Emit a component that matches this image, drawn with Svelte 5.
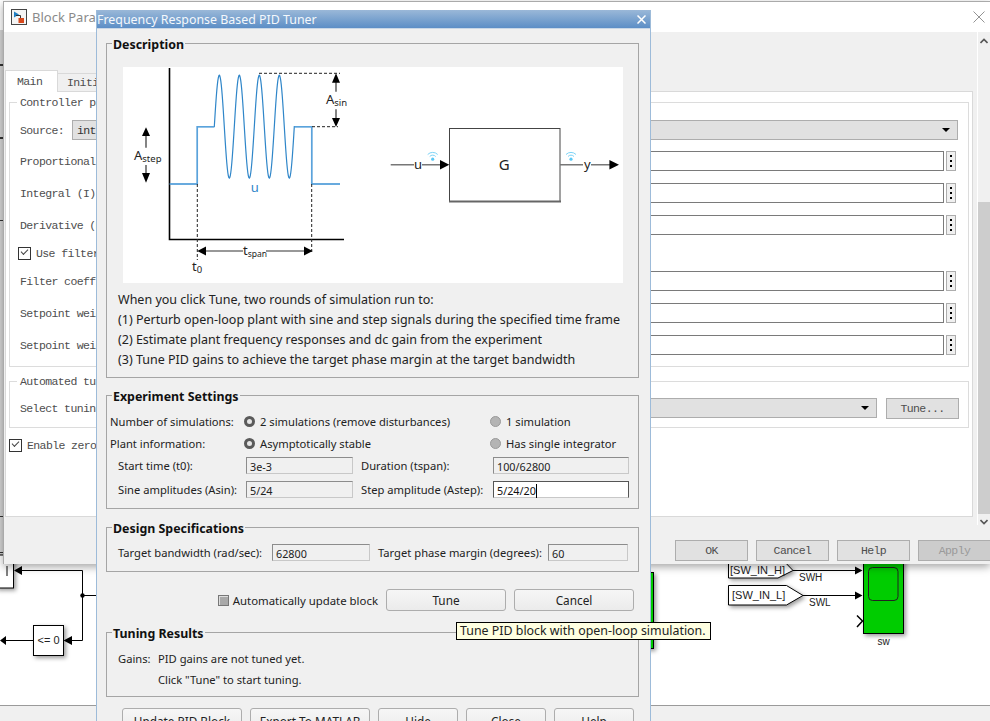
<script>
  // sine burst of the experiment signal, page px inside the description picture
  let burst = []
  for (let x = 214.3; x <= 294.31; x += 0.5) {
    burst.push(x.toFixed(1) + ',' + (126.7 - 51.4 * Math.sin(((x - 214.3) / 20) * 2 * Math.PI)).toFixed(1))
  }
  const signal = '169.7,184 197.3,184 197.3,126.7 214.3,126.7 ' + burst.join(' ') + ' 311.7,126.7 311.7,184 340,184'

  const backRows = [
    'Proportional (P):',
    'Integral (I):',
    'Derivative (D):'
  ]
  const backRows2 = [
    'Filter coefficient (N):',
    'Setpoint weight (b):',
    'Setpoint weight (c):'
  ]
  const footer = ['Update PID Block', 'Export To MATLAB', 'Hide', 'Close', 'Help']
  const wifi = [432.7, 571]
</script>

<div class="desk">
  <svg class="canvas" width="990" height="721" viewBox="0 0 990 721">
    <rect x="0" y="30" width="3" height="535" fill="#d6d6d6" />
    <g fill="#333">
      <rect x="0" y="64" width="3" height="2" />
      <rect x="0" y="137" width="3" height="2" />
      <rect x="0" y="220" width="3" height="1" />
      <rect x="0" y="516" width="3" height="1" />
      <rect x="0" y="552" width="3" height="1" />
    </g>

    <g class="shadowed">
      <rect x="-4" y="555" width="17.5" height="33" fill="#fff" stroke="#000" stroke-width="1" />
    </g>
    <path d="M7 566v10" stroke="#000" fill="none" />
    <path d="M22 570.5H82.5V640.5H72M82.5 595.5H96M33 640.5H6" stroke="#000" fill="none" />
    <path d="M14 570.5l8-4.5v9zM63.5 640.5l8.5-4.5v9zM0 640.5l6-4.5v9z" fill="#000" />
    <circle cx="82.5" cy="595.5" r="2.2" fill="#000" />
    <g class="shadowed">
      <rect x="33.5" y="625.5" width="30" height="30" fill="#fff" stroke="#000" />
    </g>
    <text x="48.5" y="644" class="block-text" text-anchor="middle">&lt;= 0</text>

    <g class="shadowed">
      <rect x="640" y="572.5" width="13.5" height="76" fill="#00cc00" stroke="#000" />
      <path d="M728.5 555H778L793 570.5L778 578H728.5Z" fill="#fff" stroke="#000" />
      <path d="M728.5 585.5H786.5L803 595.5L786.5 605H728.5Z" fill="#fff" stroke="#000" />
      <rect x="863.5" y="555" width="40" height="78.5" fill="#00cc00" stroke="#000" />
    </g>
    <rect x="868.5" y="567.5" width="29.5" height="33" rx="4" fill="#00cc00" stroke="#222" />
    <path d="M793 570.5H856M803 595.5H856" stroke="#000" fill="none" />
    <path d="M862.5 570.5l-7.5-4v8zM862.5 595.5l-7.5-4v8z" fill="#000" />
    <path d="M857 615.5l5.5 5.5-5.5 6" stroke="#000" stroke-width="1.5" fill="none" />
    <text x="730" y="574" class="block-text">[SW_IN_H]</text>
    <text x="732" y="599" class="block-text">[SW_IN_L]</text>
    <text x="799" y="581" class="block-text small">SWH</text>
    <text x="809" y="606" class="block-text small">SWL</text>
    <text x="883.5" y="645" class="block-text small" text-anchor="middle">sw</text>
  </svg>

  <div class="status"></div>

  <section class="back">
    <header class="back-title">
      <svg width="16" height="16" viewBox="0 0 16 16">
        <rect x=".5" y=".5" width="15" height="15" fill="#f4f4f4" stroke="#444" />
        <path d="M3 2.5l5 3-5 3z" fill="#1f7fc4" />
        <path d="M5 6.5h4.5V10" stroke="#333" fill="none" />
        <rect x="7.5" y="9" width="5.5" height="5" fill="#d8491c" />
      </svg>
      <span>Block Parameters: PID Controller</span>
      <svg class="back-close" width="12" height="12" viewBox="0 0 12 12">
        <path d="M.5.5l11 11M11.5.5l-11 11" stroke="#777" stroke-width=".8" fill="none" />
      </svg>
    </header>

    <div class="back-main">
      <div class="back-content">
        <div class="tabs">
          <div class="tab active">Main</div>
          <div class="tab">Initialization</div>
        </div>
        <div class="panel">
          <fieldset class="back-group first">
            <legend>Controller parameters</legend>
            <div class="back-row source">
              <span class="source-label">Source:</span>
              <div class="select"><span>internal</span><i class="caret"></i></div>
            </div>
            {#each backRows as label}
              <div class="back-row">
                <span class="back-label">{label}</span>
                <div class="field"></div>
                <div class="dots"><b></b><b></b><b></b></div>
              </div>
            {/each}
            <div class="check-row filter">
              <i class="tick"></i><span>Use filtered derivative</span>
            </div>
            {#each backRows2 as label}
              <div class="back-row">
                <span class="back-label">{label}</span>
                <div class="field"></div>
                <div class="dots"><b></b><b></b><b></b></div>
              </div>
            {/each}
          </fieldset>

          <fieldset class="back-group second">
            <legend>Automated tuning</legend>
            <div class="back-row tuning">
              <span class="back-label">Select tuning method:</span>
              <div class="select"><i class="caret"></i></div>
              <div class="back-btn">Tune...</div>
            </div>
          </fieldset>

          <div class="check-row zero">
            <i class="tick"></i><span>Enable zero-crossing detection</span>
          </div>
        </div>
        <div class="back-actions">
          <div class="back-btn">OK</div>
          <div class="back-btn">Cancel</div>
          <div class="back-btn">Help</div>
          <div class="back-btn off">Apply</div>
        </div>
      </div>
      <div class="scrollbar">
        <svg width="8" height="6" viewBox="0 0 8 6"><path d="M.5 5L4 1.5 7.5 5" stroke="#555" stroke-width="1.6" fill="none" /></svg>
        <div class="thumb"></div>
        <svg width="8" height="6" viewBox="0 0 8 6"><path d="M.5 1L4 4.5 7.5 1" stroke="#555" stroke-width="1.6" fill="none" /></svg>
      </div>
    </div>
  </section>

  <section class="dialog">
    <header class="dialog-title">
      <span>Frequency Response Based PID Tuner</span>
      <svg width="9" height="9" viewBox="0 0 9 9"><path d="M.5.5l8 8M8.5.5l-8 8" stroke="#fff" stroke-width="1.5" fill="none" /></svg>
    </header>

    <div class="dialog-body">
      <fieldset class="desc">
        <legend>Description</legend>
        <svg class="picture" width="500" height="216" viewBox="123 67 500 216">
          <rect x="123" y="67" width="500" height="216" fill="#fff" />
          <path d="M169.5 68V239.5H344" stroke="#000" stroke-width="1.6" fill="none" />
          <polyline points={signal} stroke="#2f86c9" stroke-width="1.2" fill="none" />
          <path d="M169.7 184H197.3V126.7H214M294.5 126.7H311.7V184H340" stroke="#5aa3dc" stroke-width="1.5" fill="none" />
          <g stroke="#222" stroke-width="1" stroke-dasharray="3 2" fill="none">
            <path d="M259 73.3H340M312 126.7H338M197.3 184V260M311.7 184V252" />
          </g>
          <g stroke="#333" stroke-width="1.2" fill="none">
            <path d="M336 82V91.7M336 109.3V118M146 136V147.7M146 165V173M206 251H243M266 251H304" />
          </g>
          <path d="M336 73.3l4 9.4h-8zM336 127l4-9h-8zM146 127.3l4 8.7h-8zM146 182.7l4-9.7h-8zM197.3 251l8.7-4.5v9zM312.7 251l-8.7-4.5v9z" fill="#000" />
          <text x="326" y="104" class="sym">A<tspan class="sub" dy="2">sin</tspan></text>
          <text x="134" y="160" class="sym">A<tspan class="sub" dy="2">step</tspan></text>
          <text x="254.7" y="192" class="sym blue" text-anchor="middle">u</text>
          <text x="243" y="255" class="sym">t<tspan class="sub tiny" dy="2">span</tspan></text>
          <text x="192" y="271" class="sym">t<tspan class="sub" dy="2">0</tspan></text>

          <rect x="449.5" y="128.5" width="110.5" height="73" fill="#fff" stroke="#444" stroke-width="1" />
          <path d="M449 201.5H561" stroke="#666" stroke-width="2" />
          <path d="M390.7 164.7H441M560 164.7H610" stroke="#777" stroke-width="1.5" fill="none" />
          <path d="M449.3 164.7l-9.3-4.7v9.4zM619 164.7l-9.6-4.7v9.4z" fill="#000" />
          <rect x="414" y="158" width="8" height="12" fill="#fff" />
          <rect x="583" y="158" width="8" height="12" fill="#fff" />
          <text x="418" y="169" class="sym" text-anchor="middle">u</text>
          <text x="587.3" y="169" class="sym" text-anchor="middle">y</text>
          <text x="504.3" y="170" class="sym big" text-anchor="middle">G</text>
          {#each wifi as x}
            <circle cx={x} cy="159.2" r="1.6" fill="#5cc8f5" />
            <path d="M{x - 3} 156.5a4 4 0 0 1 6 0M{x - 5} 154.5a7 7 0 0 1 10 0" stroke="#7ed4f7" fill="none" />
          {/each}
        </svg>
        <div class="desc-text">
          <p>When you click Tune, two rounds of simulation run to:</p>
          <p>(1) Perturb open-loop plant with sine and step signals during the specified time frame</p>
          <p>(2) Estimate plant frequency responses and dc gain from the experiment</p>
          <p>(3) Tune PID gains to achieve the target phase margin at the target bandwidth</p>
        </div>
      </fieldset>

      <fieldset class="experiment">
        <legend>Experiment Settings</legend>
        <div class="radio-grid">
          <span>Number of simulations:</span>
          <label><i class="radio on"></i>2 simulations (remove disturbances)</label>
          <label><i class="radio"></i>1 simulation</label>
          <span>Plant information:</span>
          <label><i class="radio on"></i>Asymptotically stable</label>
          <label><i class="radio"></i>Has single integrator</label>
        </div>
        <div class="input-grid">
          <span>Start time (t0):</span>
          <div class="input">3e-3</div>
          <span class="second">Duration (tspan):</span>
          <div class="input">100/62800</div>
          <span>Sine amplitudes (Asin):</span>
          <div class="input">5/24</div>
          <span class="second">Step amplitude (Astep):</span>
          <div class="input focus">5/24/20</div>
        </div>
      </fieldset>

      <fieldset class="design">
        <legend>Design Specifications</legend>
        <div class="design-grid">
          <span>Target bandwidth (rad/sec):</span>
          <div class="input">62800</div>
          <span class="second">Target phase margin (degrees):</span>
          <div class="input">60</div>
        </div>
      </fieldset>

      <div class="tune-row">
        <i class="box"></i>
        <span class="auto">Automatically update block</span>
        <button>Tune</button>
        <button>Cancel</button>
      </div>

      <fieldset class="results">
        <legend>Tuning Results</legend>
        <div class="gains">
          <span>Gains:</span><span>PID gains are not tuned yet.</span>
          <span></span><span>Click "Tune" to start tuning.</span>
        </div>
      </fieldset>

      <div class="footer">
        {#each footer as name, i}
          <button class:small={i > 1}>{name}</button>
        {/each}
      </div>
    </div>
  </section>

  <div class="tooltip">Tune PID block with open-loop simulation.</div>
</div>

<style>
  :global(body) {
    margin: 0;
    background: #fff;
  }

  .desk {
    position: relative;
    width: 990px;
    height: 721px;
    overflow: hidden;
    background: #fff;
    font-family: 'Noto Sans', sans-serif;
    font-size: 11.2px;
    color: #222;
  }

  .canvas {
    position: absolute;
    left: 0;
    top: 0;
  }

  .shadowed {
    filter: drop-shadow(2px 2px 2px rgba(0, 0, 0, 0.4));
  }

  .block-text {
    font-family: 'Liberation Sans', sans-serif;
    font-size: 11px;
    fill: #222;
  }

  .block-text.small {
    font-size: 10px;
  }

  .status {
    position: absolute;
    left: 0;
    right: 0;
    top: 705px;
    bottom: 0;
    background: #f0f0f0;
    border-top: 1px solid #9a9a9a;
  }

  /* window behind */
  .back {
    position: absolute;
    left: 3px;
    top: 1px;
    width: 987px;
    height: 563px;
    box-sizing: border-box;
    display: flex;
    flex-direction: column;
    background: #f0f0f0;
    border-top: 1px solid #aaa;
    border-left: 1px solid #aaa;
    box-shadow: 0 3px 8px rgba(0, 0, 0, 0.35);
    font-family: 'Liberation Mono', monospace;
    font-size: 11.5px;
    letter-spacing: -0.6px;
    color: #4e4e4e;
  }

  .back-title {
    height: 30px;
    flex: none;
    display: flex;
    align-items: center;
    gap: 5px;
    padding: 0 5px 0 7px;
    background: #fff;
    font-family: 'Noto Sans', sans-serif;
    font-size: 13px;
    letter-spacing: 0;
    color: #8a8a8a;
  }

  .back-close {
    margin-left: auto;
  }

  .back-main {
    flex: 1;
    display: flex;
    min-height: 0;
  }

  .back-content {
    width: 969px;
    padding: 38px 0 0 1px;
    box-sizing: border-box;
  }

  .tabs {
    display: flex;
    align-items: flex-end;
    height: 21px;
  }

  .tab {
    height: 17px;
    line-height: 17px;
    padding: 0 9px;
    overflow: hidden;
    white-space: nowrap;
    border: 1px solid #d9d9d9;
    border-bottom: 0;
    box-sizing: content-box;
    flex: none;
  }

  .tab.active {
    width: 31px;
    padding: 0 9px 0 11px;
    height: 21px;
    line-height: 22px;
    background: #fff;
    position: relative;
    z-index: 1;
    margin-bottom: -1px;
  }

  .tab:not(.active) {
    width: 60px;
    border-left: 0;
  }

  .panel {
    height: 426px;
    box-sizing: border-box;
    background: #fff;
    border: 1px solid #d9d9d9;
    padding: 3px 3px 0;
  }

  .back-group {
    margin: 0;
    padding: 0 12px 11px 10px;
    border: 1px solid #dcdcdc;
  }

  .back-group legend {
    padding: 0 0 0 3px;
    margin-left: -3px;
    line-height: 15px;
    background: #fff;
  }

  .back-row {
    display: flex;
    height: 20px;
    align-items: center;
    margin-top: 12px;
    white-space: nowrap;
  }

  .back-row.source {
    margin: 2px -2px 0 0;
  }

  .back-row.source + .back-row {
    margin-top: 11px;
  }

  .back-group.first {
    padding-top: 8px;
  }

  .source-label {
    width: 52px;
    flex: none;
  }

  .back-label {
    width: 200px;
    flex: none;
  }

  .select {
    flex: 1;
    height: 20px;
    box-sizing: border-box;
    display: flex;
    align-items: center;
    padding: 0 4px;
    background: #e1e1e1;
    border: 1px solid #adadad;
    color: #333;
  }

  .caret {
    width: 0;
    height: 0;
    border: 4px solid transparent;
    border-top: 4px solid #000;
    border-bottom: 0;
    margin: 0 3px 0 auto;
  }

  .field {
    flex: 1;
    height: 20px;
    box-sizing: border-box;
    border: 1px solid #7a7a7a;
    background: #fff;
  }

  .dots {
    width: 10px;
    height: 20px;
    margin-left: 2px;
    box-sizing: border-box;
    display: flex;
    flex-direction: column;
    align-items: center;
    justify-content: center;
    gap: 3px;
    background: #f0f0f0;
    border: 1px solid #adadad;
  }

  .dots b {
    width: 2px;
    height: 2px;
    background: #000;
  }

  .check-row {
    display: flex;
    align-items: center;
    gap: 5px;
    margin-top: 11px;
    height: 14px;
    white-space: nowrap;
  }

  .check-row.filter {
    margin-left: -2px;
  }

  .tick {
    width: 13px;
    height: 13px;
    box-sizing: border-box;
    border: 1px solid #333;
    position: relative;
    flex: none;
  }

  .tick::after {
    content: '';
    position: absolute;
    left: 2px;
    top: 1px;
    width: 6px;
    height: 3px;
    border-left: 1.5px solid #444;
    border-bottom: 1.5px solid #444;
    transform: rotate(-45deg);
  }

  .check-row + .back-row {
    margin-top: 11px;
  }

  .check-row.zero {
    margin: 10px 0 0 0;
  }

  .back-group.second {
    margin-top: 7px;
    padding: 0 9px 9px 10px;
  }

  .back-row.tuning {
    margin-top: 9px;
    gap: 0;
  }

  .tuning .select {
    margin-right: 9px;
  }

  .back-btn {
    width: 73px;
    height: 21px;
    box-sizing: border-box;
    display: flex;
    align-items: center;
    justify-content: center;
    background: #e1e1e1;
    border: 1px solid #adadad;
    flex: none;
  }

  .back-btn.off {
    background: #cccccc;
    color: #9a9a9a;
  }

  .back-actions {
    display: flex;
    gap: 8px;
    margin-top: 23px;
    margin-left: 670px;
    width: 400px;
  }

  .scrollbar {
    width: 14px;
    margin-left: 4px;
    height: 493px;
    display: flex;
    flex-direction: column;
    align-items: center;
    padding-top: 6px;
    box-sizing: border-box;
    background: #f0f0f0;
    border-left: 1px solid #fff;
    position: relative;
  }

  .thumb {
    width: 100%;
    flex: 1;
    margin: 158px 0 5px;
    background: #cdcdcd;
  }

  /* tuner dialog */
  .dialog {
    position: absolute;
    left: 96px;
    top: 10px;
    width: 555px;
    height: 711px;
    box-sizing: border-box;
    overflow: hidden;
    background: #f0f0f0;
    border-left: 1px solid #9dbbd9;
    border-right: 1px solid #9dbbd9;
  }

  .dialog-title {
    height: 19px;
    box-sizing: border-box;
    display: flex;
    align-items: center;
    justify-content: space-between;
    padding: 0 4px 0 0;
    background: linear-gradient(#9ab8d8, #5c8ec6);
    border-bottom: 1px solid #c9d7e6;
    color: #f4f8fc;
    font-size: 12.4px;
    white-space: nowrap;
  }

  .dialog-body {
    padding: 4px 11px 0 9px;
  }

  fieldset {
    margin: 0;
    border: 1px solid #a5a5a5;
    min-width: 0;
  }

  /* extra top padding drops the caption a little under the frame line */
  .dialog-body legend {
    padding: 4px 1px 0;
    margin: 0 0 -4px;
    font-weight: 700;
    font-size: 12.4px;
    line-height: 16px;
    color: #111;
  }

  .desc {
    padding: 18px 15px 7px 5px;
  }

  .picture {
    display: block;
    margin-left: 11px;
  }

  .sym {
    font-family: 'Noto Sans', sans-serif;
    font-size: 13px;
    fill: #222;
  }

  .sym.blue {
    fill: #2f86c9;
  }

  .sym.big {
    font-size: 15px;
  }

  .sub {
    font-size: 9.5px;
  }

  .sub.tiny {
    font-size: 8.5px;
  }

  .desc-text {
    margin: 7px 0 0 6px;
    font-size: 12.5px;
  }

  .desc-text p {
    margin: 0;
    line-height: 20px;
    white-space: nowrap;
  }

  .experiment {
    margin-top: 7px;
    padding: 9px 9px 10px 5px;
  }

  .radio-grid {
    display: grid;
    grid-template-columns: 134px 246px 1fr;
    grid-auto-rows: 22px;
    align-items: center;
    margin-left: -2px;
    white-space: nowrap;
  }

  .radio-grid label {
    display: flex;
    align-items: center;
    gap: 5px;
  }

  .radio {
    width: 11px;
    height: 11px;
    box-sizing: border-box;
    border-radius: 50%;
    background: #b4b4b4;
    border: 1px solid #9a9a9a;
    flex: none;
  }

  .radio.on {
    background: #e6e6e6;
    border: 3px solid #5a5a5a;
  }

  .input-grid {
    display: grid;
    grid-template-columns: 128px 107px 140px 136px;
    grid-auto-rows: 17px;
    row-gap: 7px;
    align-items: center;
    margin: 3px 0 0 6px;
    white-space: nowrap;
  }

  .second {
    padding-left: 8px;
  }

  .input {
    height: 17px;
    box-sizing: border-box;
    padding-left: 3px;
    line-height: 17px;
    background: #f0f0f0;
    border: 1px solid #c8c8c8;
    border-top-color: #8c8c8c;
    border-left-color: #8c8c8c;
    font-size: 10.8px;
  }

  .input.focus {
    background: #fff;
    border-color: #555;
    border-bottom-color: #c8c8c8;
    color: #111;
  }

  .input.focus::after {
    content: '';
    display: inline-block;
    width: 1px;
    height: 14px;
    background: #000;
    vertical-align: -3px;
  }

  .design {
    margin-top: 8px;
    padding: 11px 9px 10px 5px;
  }

  .design-grid {
    display: grid;
    grid-template-columns: 154px 98px 178px 80px;
    align-items: center;
    margin-left: 6px;
    white-space: nowrap;
  }

  .tune-row {
    display: flex;
    align-items: center;
    justify-content: flex-end;
    gap: 8px;
    height: 22px;
    margin-top: 17px;
    padding-right: 5px;
  }

  .box {
    width: 11px;
    height: 11px;
    box-sizing: border-box;
    background: #a9a9a9;
    border: 1px solid #777;
    box-shadow: inset 1px 1px 0 #ddd;
    margin-right: -4px;
  }

  .auto {
    font-size: 11.4px;
    white-space: nowrap;
  }

  button {
    width: 120px;
    height: 22px;
    padding: 0;
    box-sizing: border-box;
    background: linear-gradient(#f6f6f6, #ebebeb);
    border: 1px solid #adadad;
    border-radius: 3px;
    font: inherit;
    font-size: 11.8px;
    color: #222;
    white-space: nowrap;
  }

  button.small {
    width: 80px;
  }

  .results {
    margin-top: 11px;
    padding: 10px 9px 6px 5px;
  }

  .gains {
    display: grid;
    grid-template-columns: 40px 1fr;
    grid-auto-rows: 21px;
    align-items: center;
    margin-left: 6px;
  }

  .footer {
    display: flex;
    justify-content: flex-end;
    gap: 8px;
    margin-top: 11px;
    padding-right: 5px;
  }

  .footer button {
    height: 26px;
    flex: none;
  }

  .tooltip {
    position: absolute;
    left: 456px;
    top: 622px;
    width: 255px;
    height: 18px;
    box-sizing: border-box;
    padding-left: 3px;
    line-height: 16px;
    background: #ffffe1;
    border: 1px solid #000;
    font-size: 12.4px;
    color: #222;
    white-space: nowrap;
  }
</style>
